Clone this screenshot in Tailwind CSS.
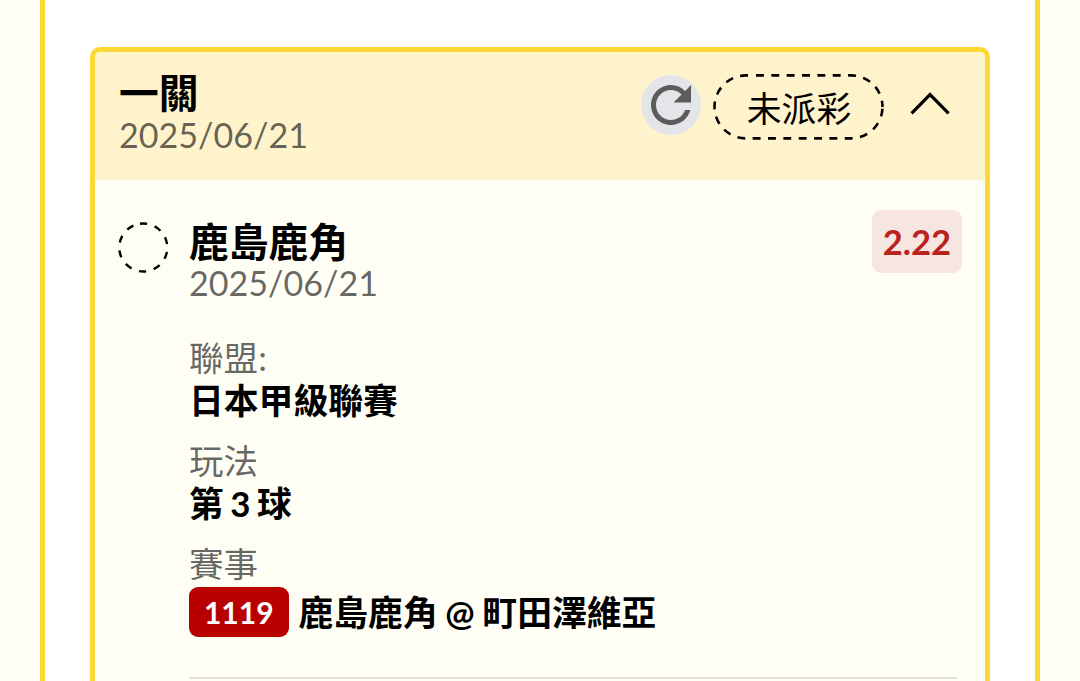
<!DOCTYPE html>
<html lang="zh-Hant">
<head>
    <meta charset="UTF-8">
    <meta name="viewport" content="width=device-width, initial-scale=1.0">
    <title>投注紀錄</title>
    <script src="https://cdn.jsdelivr.net/npm/@tailwindcss/browser@4"></script>
</head>
<body class="h-screen overflow-hidden bg-[#fffef5] px-10 font-['Lato','Noto_Sans_CJK_TC',sans-serif] text-[34.6px] leading-[43px] text-black">

    <main class="h-screen overflow-hidden border-x-5 border-[#fdd835] bg-white px-[45.5px] pt-[47px]">
        <article class="-ml-[0.5px] h-[700px] overflow-hidden rounded-[10px] border-5 border-[#fdd835] bg-[#fffef5]">

            <!-- 標題列 -->
            <header class="flex h-32 items-start justify-between bg-[#fff3cc] pl-[24px] pr-[34.5px] pt-[20px]">
                <div>
                    <h1 class="text-[39.8px] leading-[41px] font-bold">一關</h1>
                    <p class="-mt-[0.5px] text-[34.1px] text-black/60">2025/06/21</p>
                </div>
                <div class="flex items-start">
                    <button class="mt-[2.5px] size-[60px] rounded-full bg-[#e4e5e9]">
                        <svg class="size-[60px] fill-[#5c5c5c]" viewBox="0 0 24 24">
                            <path d="M17.65 6.35C16.2 4.9 14.21 4 12 4c-4.42 0-7.99 3.58-7.99 8s3.57 8 7.99 8c3.73 0 6.84-2.55 7.73-6h-2.08c-.82 2.33-3.04 4-5.65 4-3.31 0-6-2.69-6-6s2.69-6 6-6c1.66 0 3.14.69 4.22 1.78L13 11h7V4l-2.35 2.35z"/>
                        </svg>
                    </button>
                    <div class="relative ml-[12px] mt-[2px] flex h-[66px] w-[171px] items-center justify-center">
                        <svg class="absolute inset-0 h-[66px] w-[171px] fill-none stroke-black" viewBox="0 0 171 66" stroke-width="2.6" stroke-dasharray="7.9 7.45">
                            <path d="M43 1.4H138A31.5 31.5 0 0 1 169.5 32.9"/>
                            <path d="M35 1.4H33A31.5 31.5 0 0 0 1.5 32.9A31.5 31.5 0 0 0 33 64.4H138A31.5 31.5 0 0 0 169.5 32.9"/>
                        </svg>
                        <span class="pl-px pt-[3px] text-[34.8px]">未派彩</span>
                    </div>
                    <svg class="ml-[26px] mt-[18.8px] h-[26px] w-[40px] fill-none stroke-black" viewBox="0 0 40 26" stroke-width="3.2">
                        <path d="M1.6 22.3L20 3.6L38.6 22.3"/>
                    </svg>
                </div>
            </header>

            <!-- 投注內容 -->
            <section class="flex items-start pl-[23px] pr-[23px] pt-[30px]">
                <svg class="mt-[12px] size-[51px] shrink-0 fill-none stroke-black" viewBox="0 0 51 51" stroke-width="2.4" stroke-dasharray="7.2 7.88">
                    <circle cx="25.3" cy="25.5" r="24" transform="rotate(-98 25.3 25.5)"/>
                </svg>
                <div class="ml-[20px] grow pt-[11px]">
                    <h2 class="text-[39.8px] leading-[41px] font-bold">鹿島鹿角</h2>
                    <p class="-mt-px text-[34.1px] text-black/60">2025/06/21</p>
                    <dl class="mt-[32px] grid gap-[17px]">
                        <div>
                            <dt class="text-black/60">聯盟:</dt>
                            <dd class="text-[34.8px] font-bold">日本甲級聯賽</dd>
                        </div>
                        <div>
                            <dt class="text-black/60">玩法</dt>
                            <dd class="text-[34.8px] font-bold [word-spacing:-2px]">第 3 球</dd>
                        </div>
                        <div>
                            <dt class="text-black/60">賽事</dt>
                            <dd class="mt-[2px] flex items-center text-[34.8px] font-bold [word-spacing:-0.8px]">
                                <span class="-ml-[0.5px] mr-[9.5px] flex h-[50px] w-[100.5px] items-center justify-center rounded-[9px] bg-[#b80000] text-[30px] text-white">1119</span>
                                鹿島鹿角 @ 町田澤維亞
                            </dd>
                        </div>
                    </dl>
                    <hr class="mr-[5px] mt-[40px] border-t-2 border-[#e5e1dc]">
                </div>
                <span class="-ml-[90px] flex h-[62.5px] w-[90px] items-center justify-center rounded-[9px] bg-[#f7e6df] pl-px font-bold text-[#b9221f]">2.22</span>
            </section>
        </article>
    </main>

</body>
</html>
